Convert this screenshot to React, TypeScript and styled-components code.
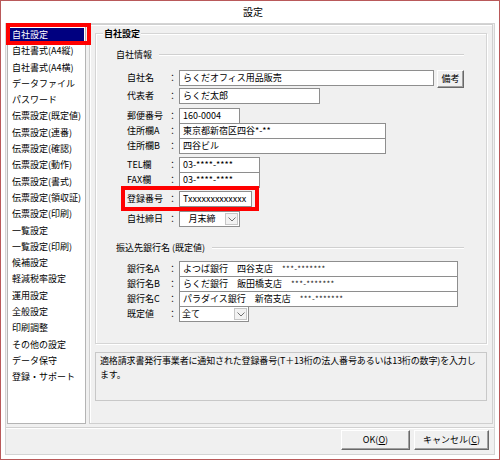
import React from "react";
import styled, { createGlobalStyle } from "styled-components";

const GlobalStyle = createGlobalStyle`
  html, body {
    margin: 0;
    padding: 0;
    background: #fff;
  }
  body {
    font-family: "Noto Sans CJK JP", "Noto Sans", sans-serif;
    font-size: 9px;
    line-height: 12px;
    color: #000;
  }
  * { box-sizing: border-box; }
`;

const Window = styled.div`
  width: 500px;
  height: 460px;
  border: 1px solid #b9595a;
  background: #fff;
  display: flex;
  flex-direction: column;
`;

const TitleBar = styled.div`
  height: 22px;
  display: flex;
  align-items: center;
  justify-content: center;
  padding-left: 6px;
  font-size: 10px;
`;

const Client = styled.div`
  flex: 1;
  margin: 0 4px 4px;
  background: #f0f0f0;
  border: 1px solid #d4d4d4;
  display: flex;
  flex-direction: column;
`;

const Body = styled.div`
  height: 403px;
  display: flex;
  padding: 0 1px 3px 1px;
`;

const NavList = styled.div`
  width: 83px;
  background: #fff;
  border: 1px solid #b4b4b4;
  padding-top: 2px;
`;

const NavItem = styled.div`
  height: 16.3px;
  padding-top: 1px;
`;

const NavLabel = styled.div<{ $selected?: boolean }>`
  position: relative;
  height: 14px;
  margin: 0 1px 0 2px;
  padding-left: 2px;
  display: flex;
  align-items: center;
  white-space: nowrap;
  background: ${(p) => (p.$selected ? "#000080" : "transparent")};
  color: ${(p) => (p.$selected ? "#fff" : "#000")};
`;

const Marker = styled.div<{ $w: number; $h: number; $l: number; $t: number }>`
  position: absolute;
  left: ${(p) => p.$l}px;
  top: ${(p) => p.$t}px;
  width: ${(p) => p.$w}px;
  height: ${(p) => p.$h}px;
  border: 4px solid #ff0000;
  pointer-events: none;
`;

const MainPanel = styled.div`
  flex: 1;
  margin-left: 3px;
  border: 1px solid #cfcfcf;
  box-shadow: inset 1px 1px 0 #fff;
  padding: 0 5px;
  display: flex;
  flex-direction: column;
`;

const GroupBox = styled.div`
  position: relative;
  margin-top: 8px;
  border: 1px solid #d5d5d5;
  box-shadow: inset 1px 1px 0 #fff, 1px 1px 0 #fff;
  padding: 15px 22px 21px 20px;
`;

const Legend = styled.div`
  position: absolute;
  top: -7px;
  left: 7px;
  padding: 0 1px;
  background: #f0f0f0;
  font-weight: bold;
  line-height: 13px;
`;

const SubHeading = styled.div<{ $mt?: number }>`
  display: flex;
  align-items: center;
  gap: 7px;
  height: 12px;
  margin-top: ${(p) => p.$mt ?? 0}px;
  white-space: nowrap;

  &::after {
    content: "";
    flex: 1;
    border-top: 1px solid #d0d0d0;
    border-bottom: 1px solid #fff;
  }
`;

const Row = styled.div<{ $mt: number }>`
  position: relative;
  display: flex;
  align-items: flex-start;
  height: 16px;
  margin-top: ${(p) => p.$mt}px;
  margin-left: 11px;
`;

const Label = styled.div`
  width: 41px;
  height: 16px;
  display: flex;
  align-items: center;
  white-space: nowrap;
`;

const Colon = styled.div`
  width: 11px;
  height: 16px;
  display: flex;
  align-items: center;
`;

const TextBox = styled.div<{ $w: number }>`
  width: ${(p) => p.$w}px;
  height: 16px;
  background: #fff;
  border: 1px solid #8e8e8e;
  padding-left: 3px;
  display: flex;
  align-items: center;
  white-space: nowrap;
  overflow: hidden;
`;

const Masked = styled.span`
  font-size: 8px;
  color: #222;
  letter-spacing: 0.3px;
`;

const Combo = styled.div<{ $w: number }>`
  width: ${(p) => p.$w}px;
  height: 16px;
  background: #fff;
  border: 1px solid #8e8e8e;
  display: flex;
`;

const ComboText = styled.div<{ $center?: boolean }>`
  flex: 1;
  display: flex;
  align-items: center;
  justify-content: ${(p) => (p.$center ? "center" : "flex-start")};
  padding-left: ${(p) => (p.$center ? 0 : 2)}px;
`;

const ComboArrow = styled.div`
  width: 13px;
  margin: 1px;
  border: 1px solid #c6c6c6;
  background: #f2f2f2;
  display: flex;
  align-items: center;
  justify-content: center;
`;

const PushButton = styled.button<{ $w: number; $h: number }>`
  width: ${(p) => p.$w}px;
  height: ${(p) => p.$h}px;
  padding: 0;
  font: inherit;
  color: #000;
  background: #f0f0f0;
  border: 1px solid;
  border-color: #fff #696969 #696969 #fff;
  box-shadow: inset -1px -1px 0 #a0a0a0;
  display: flex;
  align-items: center;
  justify-content: center;
`;

const SideButton = styled(PushButton)`
  margin-left: 3px;
`;

const DescBox = styled.div`
  margin-top: 8px;
  height: 49px;
  border: 1px solid #c8c8c8;
  padding: 1px 0 0 4px;
  line-height: 14px;
  letter-spacing: -0.15px;
  white-space: nowrap;
  overflow: hidden;
`;

const Footer = styled.div`
  flex: 1;
  border-top: 1px solid #d0d0d0;
  box-shadow: inset 0 1px 0 #fff;
  display: flex;
  justify-content: flex-end;
  align-items: flex-start;
  gap: 4px;
  padding: 2px 5px 0 0;
`;

const Chevron = () => (
  <svg width="8" height="5" viewBox="0 0 8 5">
    <path d="M0.5 0.5 L4 4 L7.5 0.5" fill="none" stroke="#707070" strokeWidth="1" />
  </svg>
);

const navItems = [
  "自社設定",
  "自社書式(A4縦)",
  "自社書式(A4横)",
  "データファイル",
  "パスワード",
  "伝票設定(既定値)",
  "伝票設定(連番)",
  "伝票設定(確認)",
  "伝票設定(動作)",
  "伝票設定(書式)",
  "伝票設定(領収証)",
  "伝票設定(印刷)",
  "一覧設定",
  "一覧設定(印刷)",
  "候補設定",
  "軽減税率設定",
  "運用設定",
  "全般設定",
  "印刷調整",
  "その他の設定",
  "データ保守",
  "登録・サポート",
];

const banks = [
  { label: "銀行名A", bank: "よつば銀行", branch: "四谷支店" },
  { label: "銀行名B", bank: "らくだ銀行", branch: "飯田橋支店" },
  { label: "銀行名C", bank: "パラダイス銀行", branch: "新宿支店" },
];

const App = () => {
  return (
    <>
      <GlobalStyle />
      <Window>
        <TitleBar>設定</TitleBar>
        <Client>
          <Body>
            <NavList>
              {navItems.map((item, i) => (
                <NavItem key={item}>
                  <NavLabel $selected={i === 0}>
                    {item}
                    {i === 0 && <Marker $l={-4} $t={-5} $w={85} $h={22} />}
                  </NavLabel>
                </NavItem>
              ))}
            </NavList>
            <MainPanel>
              <GroupBox>
                <Legend>自社設定</Legend>
                <SubHeading>自社情報</SubHeading>
                <Row $mt={9}>
                  <Label>自社名</Label>
                  <Colon>：</Colon>
                  <TextBox $w={255}>らくだオフィス用品販売</TextBox>
                  <SideButton $w={27} $h={18}>備考</SideButton>
                </Row>
                <Row $mt={2}>
                  <Label>代表者</Label>
                  <Colon>：</Colon>
                  <TextBox $w={141}>らくだ太郎</TextBox>
                </Row>
                <Row $mt={4}>
                  <Label>郵便番号</Label>
                  <Colon>：</Colon>
                  <TextBox $w={61}>160-0004</TextBox>
                </Row>
                <Row $mt={-1}>
                  <Label>住所欄A</Label>
                  <Colon>：</Colon>
                  <TextBox $w={207}>東京都新宿区四谷*-**</TextBox>
                </Row>
                <Row $mt={-1}>
                  <Label>住所欄B</Label>
                  <Colon>：</Colon>
                  <TextBox $w={207}>四谷ビル</TextBox>
                </Row>
                <Row $mt={3}>
                  <Label>TEL欄</Label>
                  <Colon>：</Colon>
                  <TextBox $w={81}>03-****-****</TextBox>
                </Row>
                <Row $mt={-1}>
                  <Label>FAX欄</Label>
                  <Colon>：</Colon>
                  <TextBox $w={81}>03-****-****</TextBox>
                </Row>
                <Row $mt={3}>
                  <Label>登録番号</Label>
                  <Colon>：</Colon>
                  <TextBox $w={73}>Txxxxxxxxxxxxx</TextBox>
                  <Marker $l={-6} $t={-5} $w={138} $h={25} />
                </Row>
                <Row $mt={4}>
                  <Label>自社締日</Label>
                  <Colon>：</Colon>
                  <Combo $w={61}>
                    <ComboText $center>月末締</ComboText>
                    <ComboArrow>
                      <Chevron />
                    </ComboArrow>
                  </Combo>
                </Row>
                <SubHeading $mt={15}>振込先銀行名 (既定値)</SubHeading>
                {banks.map((b, i) => (
                  <Row key={b.label} $mt={i === 0 ? 7 : -1}>
                    <Label>{b.label}</Label>
                    <Colon>：</Colon>
                    <TextBox $w={279}>
                      {b.bank}　{b.branch}　<Masked>***-*******</Masked>
                    </TextBox>
                  </Row>
                ))}
                <Row $mt={-1}>
                  <Label>既定値</Label>
                  <Colon>：</Colon>
                  <Combo $w={70}>
                    <ComboText>全て</ComboText>
                    <ComboArrow>
                      <Chevron />
                    </ComboArrow>
                  </Combo>
                </Row>
              </GroupBox>
              <DescBox>
                適格請求書発行事業者に通知された登録番号(T＋13桁の法人番号あるいは13桁の数字)を入力し
                <br />
                ます。
              </DescBox>
            </MainPanel>
          </Body>
          <Footer>
            <PushButton $w={69} $h={20}>
              OK(<u>O</u>)
            </PushButton>
            <PushButton $w={75} $h={20}>
              キャンセル(<u>C</u>)
            </PushButton>
          </Footer>
        </Client>
      </Window>
    </>
  );
};

export default App;
